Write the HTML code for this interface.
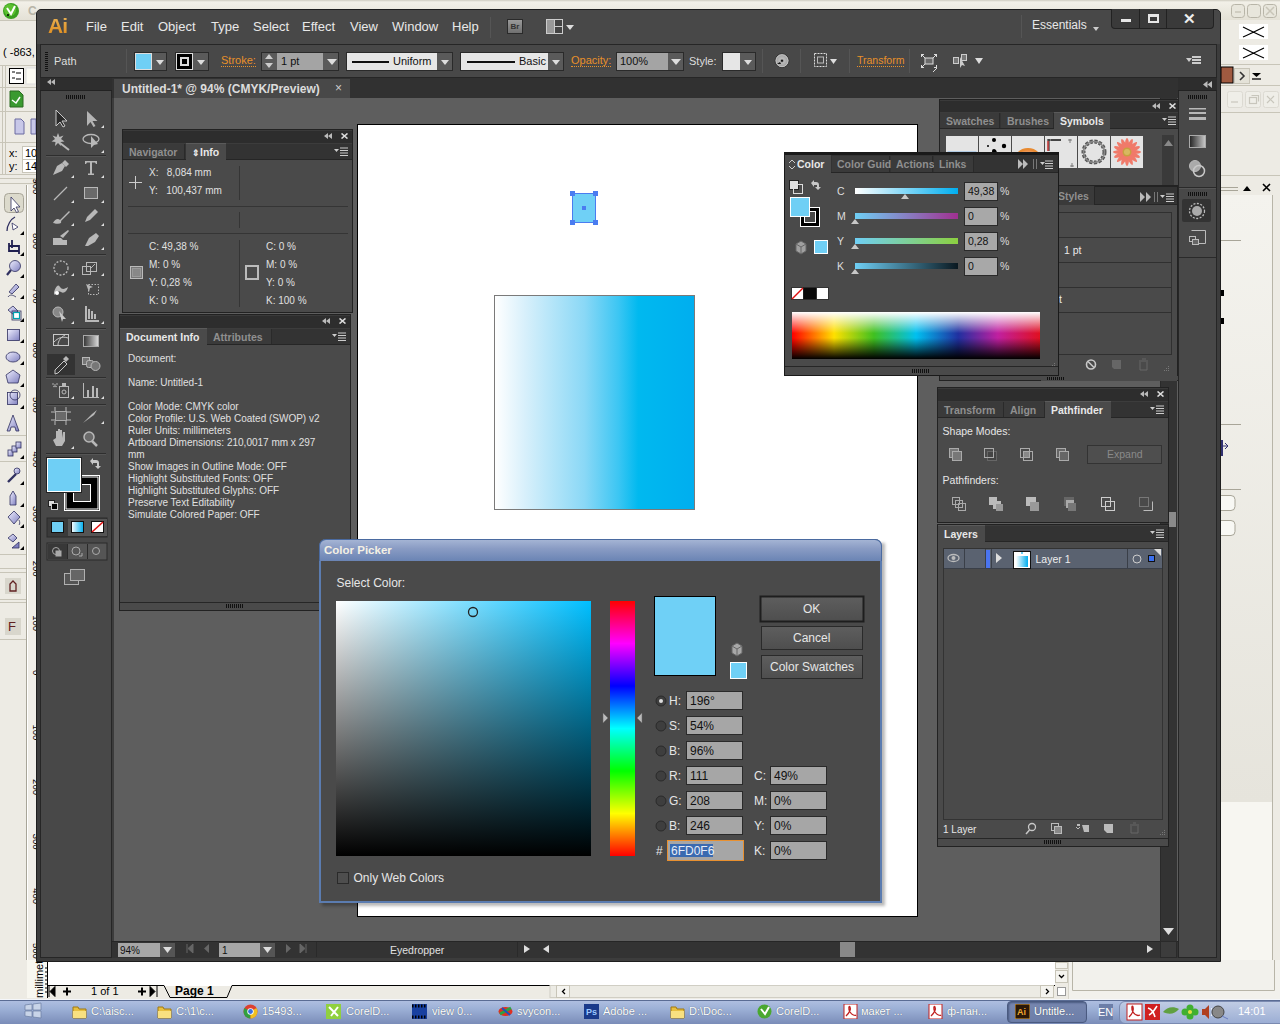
<!DOCTYPE html>
<html><head><meta charset="utf-8">
<style>
*{margin:0;padding:0;box-sizing:border-box}
html,body{width:1280px;height:1024px;overflow:hidden;background:#edebe4;font-family:"Liberation Sans",sans-serif;font-size:11px;color:#dcdcdc}
.a{position:absolute}
.t{position:absolute;white-space:nowrap;color:#e0e0e0;line-height:1}
.m{font-size:13px;color:#e8e8e8}
.panel{position:absolute;background:#4a4a4a;border:1px solid #262626}
.ph{position:absolute;left:0;right:0;top:0;background:#2f2f2f}
.tabs{position:absolute;left:0;right:0;background:#383838;border-bottom:1px solid #2a2a2a}
.tab{position:absolute;top:0;bottom:-1px;font-weight:bold;color:#8e8e8e;padding-left:7px;line-height:17px;border-right:1px solid #2a2a2a;font-size:11px}
.tab.on{background:#4a4a4a;color:#e6e6e6}
.sep{position:absolute;width:1px;background:#2e2e2e;border-right:1px solid #555}
.dd{position:absolute;background:#5a5a5a;border:1px solid #2a2a2a}
.inp{position:absolute;background:#a6a6a6;border:1px solid #2a2a2a;color:#111;font-size:11px;line-height:16px;padding-left:4px}
.or{color:#e8902a;border-bottom:1px dotted #e8902a}
</style></head><body>
<!-- ===== background corel ===== -->

<div class="a" style="left:0;top:0;width:1280px;height:21px;background:linear-gradient(#cfccc0 0,#f2f0e8 2px,#e4e1d6 100%);border-bottom:1px solid #c8c5b8"></div>
<svg class="a" style="left:2px;top:2px" width="18" height="18"><circle cx="9" cy="9" r="8" fill="#3aa020"/><circle cx="8" cy="8" r="6" fill="#5cc030"/><path d="M5 6l4 6 4-8" stroke="#fff" stroke-width="2" fill="none"/><circle cx="6" cy="13" r="1" fill="#000"/></svg>
<div class="t" style="left:28px;top:5px;font-size:12px;color:#b8b5a8;font-weight:bold">C</div>
<svg class="a" style="left:1230px;top:3px" width="48" height="16"><g fill="#e8e6dc" stroke="#b8b5a8"><rect x="1.5" y="1.5" width="13" height="13" rx="3"/><rect x="17.5" y="1.5" width="13" height="13" rx="3"/><rect x="33.5" y="1.5" width="13" height="13" rx="3"/></g><path d="M5 9h6M36 4l8 8M44 4l-8 8" stroke="#c8c5b8" stroke-width="1.5"/></svg>
<div class="t" style="left:3px;top:47px;font-size:11px;color:#000">( -863,</div>
<svg class="a" style="left:0;top:60px" width="36" height="600" viewBox="0 60 36 600"><g stroke="#c8c5b8"><path d="M0 65.5h36M0 87.5h36M0 111.5h36M0 142.5h36M0 174.5h36M0 178.5h36M0 183.5h36"/><path d="M2.5 65v110M5.5 65v110"/></g><rect x="9.5" y="68.5" width="14" height="15" fill="#fff" stroke="#000"/><path d="M12 72h3M12 78h3M16 73h5M16 79h5" stroke="#000"/><rect x="26" y="68" width="10" height="16" fill="#fbfaf2" stroke="#ddd"/><path d="M10 91h9l4 4v12h-13z" fill="#3a9a30" stroke="#2a6a20"/><path d="M12 100l4 3 4-6" stroke="#fff" stroke-width="1.5" fill="none"/><path d="M15 119h6l3 3v12h-9z" fill="#c8c8e8" stroke="#6a6aa0"/><path d="M31 119h5v15h-5z" fill="#c8c8e8" stroke="#6a6aa0"/><text x="9" y="157" font-size="11" font-family="Liberation Sans">x:</text><text x="9" y="170" font-size="11" font-family="Liberation Sans">y:</text><rect x="22.5" y="146.5" width="14" height="13" fill="#fff" stroke="#c8c5b8"/><rect x="22.5" y="159.5" width="14" height="13" fill="#fff" stroke="#c8c5b8"/><text x="25" y="157" font-size="11" font-family="Liberation Sans">10</text><text x="25" y="170" font-size="11" font-family="Liberation Sans">14</text><path d="M26.5 185v475" stroke="#a8a598"/><path d="M27.5 185v475" stroke="#fff"/><rect x="28" y="185" width="8" height="475" fill="#f0eee8"/><rect x="4.5" y="193.5" width="19" height="19" rx="4" fill="#dcdacc" stroke="#a8a598"/><defs><linearGradient id="cg" x1="0" y1="0" x2="1" y2="1"><stop offset="0" stop-color="#f0f0ff"/><stop offset="1" stop-color="#8080c0"/></linearGradient></defs><g stroke="#303060" stroke-width=".8" fill="url(#cg)"><path d="M11 197v14l3-3 2.5 4.5 2-1-2.5-4.5h4z" fill="#fff"/><path d="M7 231c0-6 4-12 8-14" fill="none" stroke-width="1.3"/><path d="M12 223l6 4-5 3z" fill="#fff"/><path d="M9 243v8h10M12 248v-8M9 246h10v8" fill="none" stroke-width="1.8" stroke="#202050"/><circle cx="15" cy="266" r="5.5"/><path d="M11 270l-4 5" stroke-width="2.2"/><path d="M9 292l7-8 3 3-7 7z"/><path d="M8 297c2-3 5-2 8 0" fill="none"/><path d="M8 310l5-4 5 5-4 4z"/><rect x="13.5" y="312.5" width="6" height="6" fill="#fff" stroke="#00a0b0" stroke-width="1.2"/><rect x="12" y="311" width="9" height="9" fill="none"/><rect x="7.5" y="329.5" width="12" height="11"/><ellipse cx="13" cy="357" rx="7" ry="5"/><path d="M13 370l7 5-2 8h-10l-2-8z"/><rect x="7.5" y="392.5" width="10" height="12"/><circle cx="15" cy="395" r="5" fill="none"/><path d="M7 431l6-16 6 16h-3l-1-4h-4l-1 4z"/><rect x="8" y="450" width="5" height="6"/><rect x="12" y="446" width="5" height="6"/><rect x="16" y="442" width="5" height="6"/><path d="M8 482l8-8" stroke-width="2.4"/><circle cx="17" cy="471" r="3"/><path d="M10 505v-9l3-5 3 5v9z"/><path d="M8 517l6-6 6 6-6 7z"/><path d="M19 520c1 2 1 4 0 5" fill="none"/><path d="M8 538l5-4 4 4-4 4z"/><path d="M12 548l7-6v6z" fill="#8080c0"/></g><g fill="#000"><path d="M24 235h-4l4-4zM24 256h-4l4-4zM24 278h-4l4-4zM24 299h-4l4-4zM24 322h-4l4-4zM24 343h-4l4-4zM24 365h-4l4-4zM24 387h-4l4-4zM24 409h-4l4-4zM24 459h-4l4-4zM24 485h-4l4-4zM24 507h-4l4-4zM24 528h-4l4-4zM24 550h-4l4-4z"/></g><path d="M0 435.5h26M0 461.5h26M0 554.5h26M0 568.5h26M0 572.5h26M0 599.5h26M0 602.5h26M0 639.5h26" stroke="#c8c5b8"/><rect x="5" y="578" width="16" height="16" fill="#d8d6cc"/><path d="M10 591v-7l3-3 3 3v7z" fill="none" stroke="#602020" stroke-width="1.3"/><rect x="5" y="618" width="16" height="17" fill="#d8d6cc"/><text x="8" y="631" font-size="13" fill="#602020" font-family="Liberation Sans">F</text></svg>
<div class="a" style="left:26px;top:660px;width:10px;height:300px;background:#f0eee8;border-left:1px solid #a8a598;box-shadow:inset 1px 0 0 #fff"></div>
<svg class="a" style="left:0;top:170px" width="36" height="800" viewBox="0 170 36 800"><text transform="translate(32.5 178.5) rotate(90)" font-size="9.5" fill="#000" font-family="Liberation Sans">900</text><text transform="translate(32.5 233.1) rotate(90)" font-size="9.5" fill="#000" font-family="Liberation Sans">800</text><text transform="translate(32.5 287.7) rotate(90)" font-size="9.5" fill="#000" font-family="Liberation Sans">700</text><text transform="translate(32.5 342.3) rotate(90)" font-size="9.5" fill="#000" font-family="Liberation Sans">600</text><text transform="translate(32.5 396.9) rotate(90)" font-size="9.5" fill="#000" font-family="Liberation Sans">500</text><text transform="translate(32.5 451.5) rotate(90)" font-size="9.5" fill="#000" font-family="Liberation Sans">400</text><text transform="translate(32.5 506.1) rotate(90)" font-size="9.5" fill="#000" font-family="Liberation Sans">300</text><text transform="translate(32.5 560.7) rotate(90)" font-size="9.5" fill="#000" font-family="Liberation Sans">200</text><text transform="translate(32.5 615.3) rotate(90)" font-size="9.5" fill="#000" font-family="Liberation Sans">100</text><text transform="translate(32.5 669.9) rotate(90)" font-size="9.5" fill="#000" font-family="Liberation Sans">0</text><text transform="translate(32.5 724.5) rotate(90)" font-size="9.5" fill="#000" font-family="Liberation Sans">100</text><text transform="translate(32.5 779.1) rotate(90)" font-size="9.5" fill="#000" font-family="Liberation Sans">200</text><text transform="translate(32.5 833.7) rotate(90)" font-size="9.5" fill="#000" font-family="Liberation Sans">300</text><text transform="translate(32.5 888.3) rotate(90)" font-size="9.5" fill="#000" font-family="Liberation Sans">400</text><text transform="translate(32.5 942.9) rotate(90)" font-size="9.5" fill="#000" font-family="Liberation Sans">500</text></svg>
<svg class="a" style="left:1221px;top:20px" width="59" height="980" viewBox="1221 20 59 980">
<rect x="1221" y="20" width="59" height="980" fill="#edebe4"/>
<rect x="1239" y="24" width="29" height="15" fill="#fff"/><rect x="1239" y="45" width="29" height="15" fill="#fff"/>
<path d="M1243 27c6 3 14 7 21 10M1264 27c-6 3-14 7-21 10M1243 48c6 3 14 7 21 10M1264 48c-6 3-14 7-21 10" stroke="#000" stroke-width="1.1" fill="none"/>
<path d="M1221 64.5h59M1221 85.5h59" stroke="#c8c5b8"/>
<rect x="1221" y="67" width="12" height="16" fill="#a05a40" stroke="#000"/>
<rect x="1234.5" y="68.5" width="15" height="15" fill="#e4e2d8" stroke="#c8c5b8"/><path d="M1240 72l4 4-4 4" stroke="#333" stroke-width="1.6" fill="none"/>
<path d="M1252 73h9l-4.5 4z" fill="#000"/><path d="M1252 79h9" stroke="#000" stroke-width="1.3"/>
<rect x="1221" y="88" width="59" height="24" fill="#eceae4"/><g stroke="#dcdad2" fill="#efeee8"><rect x="1227.5" y="91.5" width="15" height="16" rx="2"/><rect x="1245.5" y="91.5" width="15" height="16" rx="2"/><rect x="1263.5" y="91.5" width="15" height="16" rx="2"/></g><g stroke="#c8c6bc" fill="none" stroke-width="1.2"><path d="M1231 102h7"/><rect x="1249.5" y="97.5" width="7" height="6"/><path d="M1251.5 95.5h7v6"/><path d="M1267 96l7 7M1274 96l-7 7"/></g>
<path d="M1221 112.5h59" stroke="#c8c5b8"/>
<path d="M1221 175.5h59" stroke="#c8c5b8"/>
<path d="M1221 187.5h17M1221 190.5h17" stroke="#a8a598"/>
<path d="M1243 191h8l-4-5z" fill="#000"/><path d="M1263 184l7 7M1270 184l-7 7" stroke="#000" stroke-width="1.6"/>
<rect x="1221" y="195" width="51" height="607" fill="#f1f0ea"/>
<rect x="1221" y="195" width="51" height="607" fill="url(#rsg)"/>
<defs><linearGradient id="rsg" x1="0" y1="0" x2="0" y2="1"><stop offset="0" stop-color="#f4f3ee"/><stop offset="1" stop-color="#e6e4dc"/></linearGradient></defs>
<rect x="1221" y="802" width="51" height="186" fill="#f7f6f1"/>
<path d="M1272.5 195v793M1221 988.5h52" stroke="#b8b5a8"/>
<path d="M1221 240.5h20M1221 424.5h20" stroke="#a8a598"/>
<rect x="1221" y="290" width="3" height="6" fill="#000"/><rect x="1221" y="318" width="3" height="6" fill="#000"/>
<path d="M1222 446h6M1225 443l3 3-3 3" stroke="#303070" fill="none"/><rect x="1221" y="440" width="2" height="16" fill="#303070"/>
<rect x="1210" y="495.5" width="25" height="15" rx="4" fill="#f8f8f4" stroke="#a8a598"/>
<rect x="1210" y="520.5" width="25" height="15" rx="4" fill="#f8f8f4" stroke="#a8a598"/>
<path d="M1221 489.5h20" stroke="#a8a598"/>
</svg>
<svg class="a" style="left:0;top:960px" width="1280" height="40" viewBox="0 960 1280 40">
<rect x="0" y="960" width="1280" height="40" fill="#edebe4"/>
<rect x="47" y="962" width="1013" height="24" fill="#fff"/>
<rect x="27" y="960" width="20" height="38" fill="#f8f7f0"/><path d="M47.5 960v38" stroke="#000"/>
<text transform="translate(43 998) rotate(-90)" font-size="11" font-family="Liberation Sans" fill="#000">millimet</text>
<path d="M45 968h2M45 972h2M45 976h2M45 980h2M45 984h2M45 988h2M45 992h2" stroke="#000"/>
<path d="M47 985.5h117l6 12h57l5-12h828" stroke="#000" fill="none"/>
<path d="M49 986v11M50 991.5l5-5v10z" fill="#000" stroke="#000"/>
<path d="M63 991.5h8M67 987.5v8M138 991.5h8M142 987.5v8" stroke="#000" stroke-width="2"/>
<path d="M150 986.5l5 5-5 5zM157 986v11" fill="#000" stroke="#000"/>
<rect x="1055" y="962" width="13" height="36" fill="#edebe4"/>
<rect x="1055.5" y="962.5" width="12" height="6" fill="#f4f3ee" stroke="#c8c5b8"/>
<rect x="1055.5" y="970.5" width="12" height="12" fill="#f4f3ee" stroke="#c8c5b8"/><path d="M1059 975l2.5 2.5 2.5-2.5" stroke="#000" stroke-width="1.3" fill="none"/>
<rect x="550" y="985.5" width="491" height="12" fill="#ecebe4" stroke="#d0cec4"/>
<rect x="1040.5" y="985.5" width="13" height="12" fill="#f4f3ee" stroke="#c8c5b8"/><path d="M1046 989l2.5 2.5-2.5 2.5" stroke="#000" stroke-width="1.3" fill="none"/>
<rect x="556.5" y="985.5" width="13" height="12" fill="#f4f3ee" stroke="#c8c5b8"/><path d="M565 989l-2.5 2.5 2.5 2.5" stroke="#000" stroke-width="1.3" fill="none"/>
<rect x="1057.5" y="987.5" width="8" height="8" fill="#fff" stroke="#999"/>
<rect x="1068" y="960" width="212" height="40" fill="#f2f1ec"/><path d="M1068.5 960v40" stroke="#d8d6cc"/>
<path d="M1072.5 960v30.5h202v-30.5" stroke="#b8b5a8" fill="none"/>
</svg>
<div class="t" style="left:91px;top:986px;font-size:11px;color:#000">1 of 1</div>
<div class="t" style="left:175px;top:985px;font-size:12px;color:#000;font-weight:bold">Page 1</div>
<div class="a" style="left:0;top:999px;width:1280px;height:25px;background:linear-gradient(#f4f6fa 0,#f4f6fa 1px,#5a6c94 1px,#5a6c94 2px,#aebee0 2px,#9cb0d6 40%,#7a8cb8 100%)"></div>
<svg class="a" style="left:23px;top:1002px" width="20" height="18"><g fill="#c8d4e8" stroke="#6a7ca0" stroke-width=".7"><path d="M2 3l7-1v6H2zM10 2l8-1v7h-8zM2 9h7v6l-7-1zM10 9h8v7l-8-1z"/></g></svg>
<div class="a" style="left:72px;top:1004px;width:15px;height:15px"><svg width="15" height="15"><path d="M1 3h5l1 2h7v9H1z" fill="#e8c040" stroke="#a07810"/><path d="M1 7h13v7H1z" fill="#f8e080"/></svg></div>
<div class="t" style="left:91px;top:1006px;font-size:11px;color:#fff;text-shadow:0 0 1px #456">C:\aisc...</div>
<div class="a" style="left:157px;top:1004px;width:15px;height:15px"><svg width="15" height="15"><path d="M1 3h5l1 2h7v9H1z" fill="#e8c040" stroke="#a07810"/><path d="M1 7h13v7H1z" fill="#f8e080"/></svg></div>
<div class="t" style="left:176px;top:1006px;font-size:11px;color:#fff;text-shadow:0 0 1px #456">C:\1\c...</div>
<div class="a" style="left:243px;top:1004px;width:15px;height:15px"><svg width="15" height="15"><circle cx="7.5" cy="7.5" r="7" fill="#dd4030"/><path d="M7.5 7.5L1.5 4A7 7 0 0 0 7.5 14.5z" fill="#30a040"/><path d="M7.5 7.5L13.5 4A7 7 0 0 1 7.5 14.5z" fill="#f0c020"/><circle cx="7.5" cy="7.5" r="3.2" fill="#fff"/><circle cx="7.5" cy="7.5" r="2.4" fill="#3a70e0"/></svg></div>
<div class="t" style="left:262px;top:1006px;font-size:11px;color:#fff;text-shadow:0 0 1px #456">15493...</div>
<div class="a" style="left:326px;top:1004px;width:15px;height:15px"><svg width="15" height="15"><rect width="15" height="15" fill="#90d040"/><path d="M3 3l9 9M5 12l7-9" stroke="#fff" stroke-width="2"/></svg></div>
<div class="t" style="left:346px;top:1006px;font-size:11px;color:#fff;text-shadow:0 0 1px #456">CorelD...</div>
<div class="a" style="left:412px;top:1004px;width:15px;height:15px"><svg width="15" height="15"><rect width="15" height="15" fill="#1840a0"/><path d="M0 2h15M0 13h15" stroke="#000" stroke-dasharray="1.5 1.5" stroke-width="3"/></svg></div>
<div class="t" style="left:432px;top:1006px;font-size:11px;color:#fff;text-shadow:0 0 1px #456">view 0...</div>
<div class="a" style="left:498px;top:1004px;width:15px;height:15px"><svg width="15" height="15"><ellipse cx="7.5" cy="7.5" rx="7" ry="4.5" fill="#e03020"/><path d="M2 10l11-6" stroke="#30a040" stroke-width="3"/><path d="M4 4l8 7" stroke="#2050c0" stroke-width="2"/></svg></div>
<div class="t" style="left:517px;top:1006px;font-size:11px;color:#fff;text-shadow:0 0 1px #456">svycon...</div>
<div class="a" style="left:584px;top:1004px;width:15px;height:15px"><svg width="15" height="15"><rect width="15" height="15" fill="#1a3a8a"/><text x="2" y="11" font-size="9" font-weight="bold" fill="#9cc8ff" font-family="Liberation Sans">Ps</text></svg></div>
<div class="t" style="left:603px;top:1006px;font-size:11px;color:#fff;text-shadow:0 0 1px #456">Adobe ...</div>
<div class="a" style="left:670px;top:1004px;width:15px;height:15px"><svg width="15" height="15"><path d="M1 3h5l1 2h7v9H1z" fill="#e8c040" stroke="#a07810"/><path d="M1 7h13v7H1z" fill="#f8e080"/></svg></div>
<div class="t" style="left:689px;top:1006px;font-size:11px;color:#fff;text-shadow:0 0 1px #456">D:\Doc...</div>
<div class="a" style="left:757px;top:1004px;width:15px;height:15px"><svg width="15" height="15"><circle cx="7.5" cy="7.5" r="7" fill="#4aa830"/><path d="M4 5l4 5 4-7" stroke="#fff" stroke-width="2" fill="none"/></svg></div>
<div class="t" style="left:776px;top:1006px;font-size:11px;color:#fff;text-shadow:0 0 1px #456">CorelD...</div>
<div class="a" style="left:843px;top:1004px;width:15px;height:15px"><svg width="15" height="15"><rect x="1" y="0" width="13" height="15" fill="#fff" stroke="#c02020"/><path d="M3 12c3-3 5-7 4-9s-2 2 0 5 5 4 6 3" stroke="#c02020" fill="none" stroke-width="1.3"/></svg></div>
<div class="t" style="left:861px;top:1006px;font-size:11px;color:#fff;text-shadow:0 0 1px #456">макет ...</div>
<div class="a" style="left:928px;top:1004px;width:15px;height:15px"><svg width="15" height="15"><rect x="1" y="0" width="13" height="15" fill="#fff" stroke="#c02020"/><path d="M3 12c3-3 5-7 4-9s-2 2 0 5 5 4 6 3" stroke="#c02020" fill="none" stroke-width="1.3"/></svg></div>
<div class="t" style="left:947px;top:1006px;font-size:11px;color:#fff;text-shadow:0 0 1px #456">ф-пан...</div>
<div class="a" style="left:1007px;top:1001px;width:80px;height:22px;border-radius:4px;background:linear-gradient(#7888b0,#6c7ea8);border:1px solid #4a5a80;box-shadow:inset 1px 1px 2px #4a5a80"></div>
<div class="a" style="left:1015px;top:1004px;width:15px;height:15px"><svg width="15" height="15"><rect width="15" height="15" fill="#2a1808" stroke="#e0a030"/><text x="2" y="11" font-size="9" font-weight="bold" fill="#f0a830" font-family="Liberation Sans">Ai</text></svg></div>
<div class="t" style="left:1034px;top:1006px;font-size:11px;color:#fff;text-shadow:0 0 1px #456">Untitle...</div>
<div class="a" style="left:1099px;top:1004px;width:14px;height:16px;background:#6c7ea8"></div>
<div class="t" style="left:1098px;top:1007px;font-size:11px;color:#fff">EN</div>
<div class="a" style="left:1119px;top:1001px;width:165px;height:23px;border-radius:6px 0 0 6px;background:linear-gradient(#c0cce4,#9caed4);border:1px solid #7a8ab0"></div>
<svg class="a" style="left:1125px;top:1003px" width="95" height="18">
<rect x="2" y="1" width="15" height="16" fill="#fff" stroke="#c02020"/><path d="M4 14c3-3 5-7 4-10s-2 2 0 5 5 4 7 3" stroke="#c02020" fill="none" stroke-width="1.3"/>
<rect x="20" y="1" width="15" height="16" fill="#d02020"/><path d="M24 12c4-2 6-6 8-9M23 5c3 1 6 5 7 9" stroke="#fff" stroke-width="1.6" fill="none"/>
<path d="M38 9c4-5 10-6 16-3-4 5-10 6-16 3z" fill="#60a040"/>
<g fill="#40b030"><circle cx="65" cy="5" r="3.5"/><circle cx="70" cy="9" r="3.5"/><circle cx="65" cy="13" r="3.5"/><circle cx="60" cy="9" r="3.5"/></g><circle cx="65" cy="9" r="2" fill="#e0e040"/>
<path d="M77 6h3l4-4v14l-4-4h-3z" fill="#b04020"/><path d="M86 5c2 2 2 6 0 8" stroke="#fff" fill="none"/>
</svg>
<svg class="a" style="left:1210px;top:1004px" width="20" height="16"><circle cx="8" cy="8" r="6" fill="#888" stroke="#444"/><path d="M12 12l6 3" stroke="#6a7cc0"/></svg>
<div class="t" style="left:1238px;top:1006px;font-size:11px;color:#fff">14:01</div>
<!-- ===== AI window ===== -->
<div class="a" style="left:36px;top:9px;width:1185px;height:953px;background:#3c3c3c;border:1px solid #1e1e1e;border-radius:5px 5px 0 0"></div>
<div class="a" style="left:37px;top:10px;width:1183px;height:34px;background:#484848;border-radius:4px 4px 0 0"></div>
<!-- logo + menus -->
<div class="t" style="left:48px;top:15px;font-size:21px;font-weight:bold;color:#e39a30;letter-spacing:-1px;background:linear-gradient(#e8b458,#e08c1c);-webkit-background-clip:text;-webkit-text-fill-color:transparent">Ai</div>
<div class="t m" style="left:86px;top:20px">File</div>
<div class="t m" style="left:121px;top:20px">Edit</div>
<div class="t m" style="left:158px;top:20px">Object</div>
<div class="t m" style="left:211px;top:20px">Type</div>
<div class="t m" style="left:253px;top:20px">Select</div>
<div class="t m" style="left:302px;top:20px">Effect</div>
<div class="t m" style="left:350px;top:20px">View</div>
<div class="t m" style="left:392px;top:20px">Window</div>
<div class="t m" style="left:452px;top:20px">Help</div>
<div class="sep" style="left:490px;top:17px;height:21px"></div>
<div class="a" style="left:507px;top:19px;width:16px;height:15px;background:linear-gradient(#9a9a9a,#707070);border:1px solid #2a2a2a;color:#333;font-size:8px;font-weight:bold;line-height:13px;text-align:center">Br</div>
<div class="a" style="left:546px;top:19px;width:17px;height:15px;border:1px solid #ccc;background:#444"><div class="a" style="left:7px;top:0;width:1px;height:13px;background:#ccc"></div><div class="a" style="left:8px;top:6px;width:7px;height:1px;background:#ccc"></div><div class="a" style="left:0;top:0;width:7px;height:13px;background:#999"></div></div>
<div class="a" style="left:566px;top:25px;border-left:4px solid transparent;border-right:4px solid transparent;border-top:5px solid #ddd"></div>
<div class="sep" style="left:1021px;top:15px;height:23px"></div>
<div class="t m" style="left:1032px;top:19px;font-size:12px">Essentials</div>
<div class="a" style="left:1093px;top:27px;border-left:3px solid transparent;border-right:3px solid transparent;border-top:4px solid #ccc"></div>
<!-- window buttons -->
<div class="a" style="left:1111px;top:9px;width:103px;height:20px;background:#3a3a3a;border:1px solid #222;border-top:0;border-radius:0 0 4px 4px"></div>
<div class="a" style="left:1139px;top:9px;width:1px;height:19px;background:#222"></div>
<div class="a" style="left:1166px;top:9px;width:1px;height:19px;background:#222"></div>
<div class="a" style="left:1121px;top:19px;width:10px;height:3px;background:#e6e6e6"></div>
<div class="a" style="left:1148px;top:14px;width:11px;height:9px;border:2px solid #e6e6e6;border-top-width:3px"></div>
<div class="t" style="left:1183px;top:11px;font-size:15px;font-weight:bold;color:#eee">✕</div>

<!-- ===== control bar ===== -->
<div class="a" style="left:40px;top:44px;width:1177px;height:34px;background:#484848;border:1px solid #262626"></div>
<div class="a" style="left:45px;top:52px;width:3px;height:20px;background:repeating-linear-gradient(#111 0 1px,transparent 1px 2px)"></div>
<div class="t" style="left:54px;top:56px;font-size:11px;color:#ddd">Path</div>
<div class="sep" style="left:126px;top:49px;height:24px"></div>
<div class="dd" style="left:134px;top:52px;width:33px;height:19px"></div>
<div class="a" style="left:135px;top:53px;width:17px;height:17px;background:#6fcff5;border:1px solid #ddd"></div>
<div class="a" style="left:156px;top:60px;border-left:4px solid transparent;border-right:4px solid transparent;border-top:5px solid #ddd"></div>
<div class="dd" style="left:175px;top:52px;width:34px;height:19px"></div>
<div class="a" style="left:176px;top:53px;width:17px;height:17px;background:#000;border:1px solid #ddd"><div class="a" style="left:3px;top:3px;width:9px;height:9px;border:2px solid #ddd"></div></div>
<div class="a" style="left:197px;top:60px;border-left:4px solid transparent;border-right:4px solid transparent;border-top:5px solid #ddd"></div>
<div class="t or" style="left:221px;top:55px;font-size:11px">Stroke:</div>
<div class="dd" style="left:261px;top:52px;width:78px;height:19px"></div>
<div class="a" style="left:277px;top:53px;width:46px;height:17px;background:#a4a4a4"></div>
<div class="t" style="left:281px;top:56px;color:#111">1 pt</div>
<div class="a" style="left:265px;top:54px;border-left:4px solid transparent;border-right:4px solid transparent;border-bottom:5px solid #ccc"></div>
<div class="a" style="left:265px;top:63px;border-left:4px solid transparent;border-right:4px solid transparent;border-top:5px solid #ccc"></div>
<div class="a" style="left:327px;top:59px;border-left:5px solid transparent;border-right:5px solid transparent;border-top:6px solid #ddd"></div>
<div class="dd" style="left:346px;top:52px;width:107px;height:19px"></div>
<div class="a" style="left:347px;top:53px;width:90px;height:17px;background:#e6e6e6"></div>
<div class="a" style="left:352px;top:61px;width:37px;height:2px;background:#111"></div>
<div class="t" style="left:393px;top:56px;color:#111">Uniform</div>
<div class="a" style="left:441px;top:60px;border-left:4px solid transparent;border-right:4px solid transparent;border-top:5px solid #ddd"></div>
<div class="dd" style="left:460px;top:52px;width:104px;height:19px"></div>
<div class="a" style="left:461px;top:53px;width:87px;height:17px;background:#e6e6e6"></div>
<div class="a" style="left:467px;top:61px;width:48px;height:2px;background:#111"></div>
<div class="t" style="left:519px;top:56px;color:#111">Basic</div>
<div class="a" style="left:552px;top:60px;border-left:4px solid transparent;border-right:4px solid transparent;border-top:5px solid #ddd"></div>
<div class="t or" style="left:571px;top:55px;font-size:11px">Opacity:</div>
<div class="dd" style="left:616px;top:52px;width:68px;height:19px"></div>
<div class="a" style="left:617px;top:53px;width:51px;height:17px;background:#a4a4a4"></div>
<div class="t" style="left:620px;top:56px;color:#111">100%</div>
<div class="a" style="left:671px;top:59px;border-left:5px solid transparent;border-right:5px solid transparent;border-top:6px solid #ddd"></div>
<div class="t" style="left:689px;top:56px;color:#ddd">Style:</div>
<div class="dd" style="left:722px;top:52px;width:34px;height:19px"></div>
<div class="a" style="left:723px;top:53px;width:17px;height:17px;background:#e6e6e6"></div>
<div class="a" style="left:744px;top:60px;border-left:4px solid transparent;border-right:4px solid transparent;border-top:5px solid #ddd"></div>
<div class="sep" style="left:762px;top:49px;height:24px"></div>
<svg class="a" style="left:770px;top:50px" width="220" height="24" viewBox="770 50 220 24">
<defs><radialGradient id="glb" cx=".5" cy=".5" r=".5"><stop offset="0" stop-color="#444"/><stop offset=".3" stop-color="#bbb"/><stop offset="1" stop-color="#999"/></radialGradient></defs>
<circle cx="782" cy="60.7" r="7" fill="url(#glb)" stroke="#333"/><circle cx="782" cy="60.7" r="6" fill="none" stroke="#ccc" stroke-width=".8"/><circle cx="782" cy="60.7" r="1" fill="#111"/><path d="M777 64l3-2 1 2z" fill="#111"/>
<rect x="814.5" y="53.5" width="12" height="13" fill="none" stroke="#ddd" stroke-dasharray="2 1"/>
<rect x="817.5" y="57" width="6" height="6" fill="none" stroke="#bbb"/>
<path d="M830 59h7l-3.5 5z" fill="#ddd"/>
<rect x="925" y="58" width="8" height="6" fill="#6a6a6a" stroke="#ddd"/>
<path d="M921 54l4 4M937 54l-4 4M921 68l4-4M937 68l-4 4" stroke="#ddd"/>
<path d="M921 54h3v1h-2v2h-1zM937 54h-3v1h2v2h1zM921 68h3v-1h-2v-2h-1zM937 68h-3v-1h2v-2h1z" fill="#ddd"/>
<rect x="953.5" y="57.5" width="5" height="6" fill="#777" stroke="#ccc"/>
<rect x="961.5" y="54.5" width="5" height="6" fill="#777" stroke="#ccc"/>
<path d="M960 57v11l2-3 3 1z" fill="#ccc"/>
<path d="M975 58h8l-4 6z" fill="#ddd"/>
</svg>
<div class="sep" style="left:800px;top:49px;height:24px"></div>
<div class="sep" style="left:849px;top:49px;height:24px"></div>
<div class="t or" style="left:857px;top:55px;font-size:10.5px">Transform</div>
<div class="sep" style="left:909px;top:49px;height:24px"></div>
<div class="a" style="left:1186px;top:58px;border-left:3px solid transparent;border-right:3px solid transparent;border-top:4px solid #ccc"></div>
<div class="a" style="left:1192px;top:56px;width:9px;height:9px;background:repeating-linear-gradient(#ccc 0 2px,transparent 2px 3px)"></div>

<!-- ===== tab bar ===== -->
<div class="a" style="left:112px;top:78px;width:1066px;height:20px;background:#313131"></div>
<div class="a" style="left:114px;top:79px;width:236px;height:19px;background:#484848"></div>
<div class="t" style="left:122px;top:83px;font-size:12px;font-weight:bold;color:#dcdcdc">Untitled-1* @ 94% (CMYK/Preview)</div>
<div class="t" style="left:335px;top:82px;font-size:12px;color:#ccc">×</div>

<!-- ===== canvas ===== -->
<div class="a" style="left:114px;top:98px;width:1064px;height:844px;background:#5e5e5e"></div>

<!-- ===== toolbar ===== -->
<div class="a" style="left:40px;top:78px;width:72px;height:880px;background:#484848;border:1px solid #262626;border-top:0"></div>
<div class="a" style="left:40px;top:78px;width:72px;height:13px;background:#2e2e2e;border-bottom:1px solid #222"></div>
<svg class="a" style="left:40px;top:78px" width="72" height="520" viewBox="40 78 72 520">
<g fill="#b8b8b8"><path d="M47 82l4 3v-6z M51 82l4 3v-6z"/></g>
<g fill="#111"><rect x="66" y="95" width="1" height="4"/><rect x="68" y="95" width="1" height="4"/><rect x="70" y="95" width="1" height="4"/><rect x="72" y="95" width="1" height="4"/><rect x="74" y="95" width="1" height="4"/><rect x="76" y="95" width="1" height="4"/><rect x="78" y="95" width="1" height="4"/><rect x="80" y="95" width="1" height="4"/><rect x="82" y="95" width="1" height="4"/><rect x="84" y="95" width="1" height="4"/></g>
<g fill="#444" stroke="#aaa" stroke-width="1"><path d="M56 110v16l4-4 3 5 2-1-3-5h5z" fill="#2a2a2a" stroke="#c8c8c8"/></g>
<path d="M87 111v15l3.5-4 3 5 2-1-3-5h5z" fill="#b4b4b4"/>
<g fill="#e0e0e0"><path d="M104 128h-3l3-3z"/><path d="M104 153h-3l3-3z"/><path d="M74 178h-3l3-3z"/><path d="M104 178h-3l3-3z"/><path d="M74 203h-3l3-3z"/><path d="M104 203h-3l3-3z"/><path d="M74 226h-3l3-3z"/><path d="M104 226h-3l3-3z"/><path d="M104 250h-3l3-3z"/><path d="M74 276h-3l3-3z"/><path d="M104 276h-3l3-3z"/><path d="M74 300h-3l3-3z"/><path d="M74 324h-3l3-3z"/><path d="M104 324h-3l3-3z"/><path d="M74 374h-3l3-3z"/><path d="M74 399h-3l3-3z"/><path d="M104 399h-3l3-3z"/><path d="M104 424h-3l3-3z"/><path d="M74 449h-3l3-3z"/></g>
<g stroke="#b8b8b8" fill="#b8b8b8">
<path d="M58 133l1.5 4 4-1.5-2.5 3.5 3.5 2.5-4 .5.5 4-3-3-3 3 .5-4-4-.5 3.5-2.5-2.5-3.5 4 1.5z" stroke="none"/>
<path d="M60 143l9 7" stroke-width="2"/>
<ellipse cx="91" cy="139" rx="8" ry="4.5" fill="none" stroke-width="1.3"/>
<path d="M91 136v12l3-3 4-1z" stroke="none"/>
</g>
<rect x="46" y="155" width="60" height="1" fill="#2e2e2e"/><rect x="46" y="156" width="60" height="1" fill="#555"/>
<g fill="#b8b8b8" stroke="none">
<path d="M53 175l4-9 5-3 3 3-3 5-9 4z"/><path d="M62 163l3-3 4 4-3 3z"/>
<path d="M85 161h12v3h-1l-1-1.5h-3v11h2v1.5h-6v-1.5h2v-11h-3l-1 1.5h-1z"/>
</g>
<path d="M54 200l13-13" stroke="#b8b8b8" stroke-width="1.3"/>
<rect x="84.5" y="187.5" width="13" height="11" fill="#6a6a6a" stroke="#b8b8b8"/>
<g fill="#b8b8b8">
<path d="M53 223c2-4 5-5 7-3l9-9 1 1-9 9c1 2-1 4-8 2z"/>
<path d="M85 222l2-5 8-8 3 3-8 8z"/>
<path d="M53 245v-7h8l2 2h4v5z"/><path d="M60 236l8-6 1 1-6 7z"/>
<path d="M85 246l4-8 7-5 3 3-4 6-7 4z" />
</g>
<rect x="46" y="254" width="60" height="1" fill="#2e2e2e"/><rect x="46" y="255" width="60" height="1" fill="#555"/>
<circle cx="61" cy="268" r="7" fill="none" stroke="#b8b8b8" stroke-width="1.3" stroke-dasharray="2 1.5"/>
<g fill="none" stroke="#b8b8b8"><rect x="86.5" y="262.5" width="10" height="9"/><rect x="82.5" y="266.5" width="8" height="8"/><path d="M91 268l4-4"/></g>
<g fill="#b8b8b8"><path d="M54 292c2-6 4-8 6-5s5 2 8 0c-1 4-4 7-7 5s-4 0-7 3z"/><circle cx="57" cy="293" r="2" fill="#fff"/></g>
<g fill="none" stroke="#b8b8b8" stroke-dasharray="1.5 1.5"><rect x="88.5" y="284.5" width="10" height="10"/></g><path d="M86 284l7 3-3 1-1 4z" fill="#b8b8b8"/>
<g><circle cx="58" cy="312" r="5" fill="#888" stroke="#b8b8b8"/><path d="M59 311l7 8-3 0-1 3z" fill="#c8c8c8"/></g>
<g fill="#b8b8b8"><path d="M85 306h2v14h12v2h-14z"/><rect x="88" y="309" width="2" height="10"/><rect x="91" y="311" width="2" height="8"/><rect x="94" y="314" width="2" height="5"/></g>
<rect x="46" y="328" width="60" height="1" fill="#2e2e2e"/><rect x="46" y="329" width="60" height="1" fill="#555"/>
<g fill="none" stroke="#c8c8c8"><rect x="53.5" y="334.5" width="15" height="11"/><path d="M54 342c4-4 8-6 14-4M58 345c0-4 3-8 7-10"/></g>
<defs><linearGradient id="tg" x1="0" x2="1"><stop offset="0" stop-color="#333"/><stop offset="1" stop-color="#ddd"/></linearGradient></defs>
<rect x="83.5" y="335.5" width="15" height="11" fill="url(#tg)" stroke="#aaa"/>
<rect x="47" y="354" width="28" height="21" fill="#333"/>
<path d="M55 370l9-9 3 3-9 9-3 1z" fill="none" stroke="#c8c8c8"/><path d="M63 359l3-3 3 3-3 3z" fill="#b8b8b8"/>
<g fill="#777" stroke="#b8b8b8"><rect x="82.5" y="357.5" width="7" height="7"/><rect x="86.5" y="360.5" width="7" height="7" rx="2"/><circle cx="95.5" cy="366" r="4.5"/></g>
<rect x="46" y="377" width="60" height="1" fill="#2e2e2e"/><rect x="46" y="378" width="60" height="1" fill="#555"/>
<g fill="none" stroke="#b8b8b8"><rect x="59.5" y="386.5" width="9" height="11"/><circle cx="64" cy="392" r="2"/></g><g fill="#b8b8b8"><rect x="62" y="383" width="4" height="3"/><circle cx="53" cy="384" r=".8"/><circle cx="55" cy="385" r=".8"/><circle cx="57" cy="384" r=".8"/><circle cx="54" cy="386.5" r=".8"/><circle cx="56" cy="386.5" r=".8"/></g>
<g fill="#b8b8b8"><rect x="83" y="383" width="1" height="15"/><rect x="83" y="397" width="16" height="1"/><rect x="87" y="390" width="2" height="7"/><rect x="92" y="386" width="2" height="11"/><rect x="96" y="388" width="2" height="9"/></g>
<rect x="46" y="404" width="60" height="1" fill="#2e2e2e"/><rect x="46" y="405" width="60" height="1" fill="#555"/>
<g><rect x="55.5" y="411.5" width="11" height="9" fill="#6a6a6a" stroke="#aaa"/><path d="M51 412h4M51 420h4M67 412h4M67 420h4M55 407v4M55 421v4M66 407v4M66 421v4" stroke="#b8b8b8"/></g>
<path d="M83 423l9-9 5-4-3 5z" fill="#b8b8b8"/>
<path d="M53 440l3-2v-7h2v6v-8h2v8v-7h2v8l1-6h2v9l-3 5h-6z" fill="#b8b8b8"/>
<circle cx="89" cy="437" r="5" fill="#6a6a6a" stroke="#b8b8b8" stroke-width="1.5"/><path d="M92 441l5 5" stroke="#b8b8b8" stroke-width="2.5"/>
<rect x="46" y="453" width="60" height="1" fill="#2e2e2e"/><rect x="46" y="454" width="60" height="1" fill="#555"/>
<!-- fill/stroke -->
<rect x="64.5" y="475.5" width="35" height="35" fill="#000" stroke="#fff"/>
<rect x="65" y="476" width="34" height="34" fill="#000" stroke="#111" stroke-width="0"/>
<rect x="66" y="477" width="32" height="32" fill="none" stroke="#fff"/>
<rect x="73.5" y="484.5" width="17" height="17" fill="#484848" stroke="#fff"/>
<rect x="46.5" y="457.5" width="35" height="35" fill="#6fcff5" stroke="#222"/>
<rect x="47.5" y="458.5" width="33" height="33" fill="none" stroke="#fff"/>
<path d="M90 461l3-3v2h3a3 3 0 0 1 3 3v3h2l-3 3-3-3h2v-3h-4v2z" fill="#c8c8c8"/>
<g><rect x="48.5" y="500.5" width="6" height="6" fill="#ddd" stroke="#222"/><rect x="51.5" y="503.5" width="6" height="6" fill="#000" stroke="#ccc"/></g>
<rect x="47" y="518" width="60" height="19" fill="#3a3a3a" stroke="#2a2a2a"/>
<rect x="68" y="519" width="20" height="17" fill="#555"/><rect x="88" y="519" width="19" height="17" fill="#555"/>
<rect x="51.5" y="521.5" width="12" height="11" fill="#6fcff5" stroke="#111"/>
<defs><linearGradient id="bg1" x1="0" x2="1"><stop offset="0" stop-color="#fff"/><stop offset="1" stop-color="#00aeef"/></linearGradient></defs>
<rect x="71.5" y="521.5" width="12" height="11" fill="url(#bg1)" stroke="#111"/>
<rect x="91.5" y="521.5" width="12" height="11" fill="#fff" stroke="#111"/><path d="M92 532l11-10" stroke="#e01010" stroke-width="1.6"/>
<rect x="47" y="543" width="60" height="17" fill="#555" stroke="#2a2a2a"/><rect x="48" y="544" width="19" height="15" fill="#383838"/>
<rect x="67" y="544" width="1" height="15" fill="#2a2a2a"/><rect x="87" y="544" width="1" height="15" fill="#2a2a2a"/>
<g fill="none" stroke="#aaa"><circle cx="56" cy="551" r="3.5"/><rect x="56" y="551" width="5" height="5" fill="#aaa"/><circle cx="76" cy="551" r="4"/><path d="M79 556h3v-3"/><circle cx="96" cy="551" r="3.5"/></g>
<g fill="#555" stroke="#b0b0b0"><rect x="64.5" y="573.5" width="14" height="11"/><rect x="70.5" y="569.5" width="14" height="11" fill="#666"/></g>
</svg>

<div class="a" style="left:1160px;top:98px;width:17px;height:843px;background:#333;border-left:1px solid #2a2a2a"></div>
<svg class="a" style="left:1163px;top:928px" width="11" height="7"><path d="M0 0h11l-5.5 7z" fill="#ddd"/></svg>
<div class="a" style="left:112px;top:941px;width:1066px;height:17px;background:#333;border-top:1px solid #262626"></div>
<div class="a" style="left:1160px;top:941px;width:17px;height:17px;background:#3c3c3c;border:1px solid #2a2a2a"></div>
<div class="a" style="left:357px;top:124px;width:561px;height:793px;background:#fff;border:1px solid #000"></div>
<div class="a" style="left:494px;top:295px;width:201px;height:215px;border:1px solid #7a7a7a;background:linear-gradient(to right,#fff 0%,#d8f0fb 15%,#8ad8f6 45%,#3cc6f3 62%,#00b9ef 72%,#00aeef 100%)"></div>
<svg class="a" style="left:568px;top:188px" width="32" height="40" viewBox="568 188 32 40">
<rect x="572.5" y="193.5" width="23" height="29" fill="#6fd0f6" stroke="#4a7cf0"/>
<g fill="#4a7cf0"><rect x="570" y="191" width="5" height="5"/><rect x="593" y="191" width="5" height="5"/><rect x="570" y="220" width="5" height="5"/><rect x="593" y="220" width="5" height="5"/><rect x="582" y="206" width="4" height="4"/></g>
</svg>
<div class="a" style="left:122px;top:129px;width:231px;height:184px;background:#4a4a4a;border:1px solid #222"></div>
<div class="a" style="left:123px;top:130px;width:229px;height:13px;background:#2d2d2d;border-top:1px solid #3a3a3a"></div>
<svg class="a" style="left:324px;top:133px" width="8" height="6"><path d="M0 3l4-3v6zM4 3l4-3v6z" fill="#bbb"/></svg>
<svg class="a" style="left:341px;top:133px" width="7" height="6"><path d="M0.5 0.5l6 5M6.5 0.5l-6 5" stroke="#ddd" stroke-width="1.6"/></svg>
<div class="a" style="left:123px;top:143px;width:229px;height:17px;background:#333;border-top:1px solid #3c3c3c;border-bottom:1px solid #262626"></div>
<div class="a" style="left:123px;top:144px;width:62px;height:15px;background:#3a3a3a;border-right:1px solid #2a2a2a"></div>
<div class="t" style="left:129px;top:147px;font-size:10.5px;font-weight:bold;color:#8f8f8f">Navigator</div>
<div class="a" style="left:186px;top:143px;width:40px;height:18px;background:#4a4a4a;border-top:1px solid #5a5a5a"></div>
<div class="t" style="left:192px;top:147px;font-size:10.5px;font-weight:bold;color:#e8e8e8"><span style="font-size:9px">&#8661;</span>Info</div>
<svg class="a" style="left:334px;top:147px" width="15" height="9"><path d="M0 2h5l-2.5 3z" fill="#ccc"/><path d="M6 1h8M6 3.5h8M6 6h8M6 8.5h8" stroke="#ccc" stroke-width="1.2"/></svg>
<svg class="a" style="left:128px;top:165px" width="222" height="145" viewBox="128 165 222 145"><path d="M129 182.5h13M135.5 176v13" stroke="#ccc"/><path d="M239.5 166v34M239.5 212v16M239.5 240v67" stroke="#353535"/><path d="M128 206.5h220M128 233.5h220" stroke="#353535"/><rect x="130.5" y="266.5" width="12" height="12" fill="#777" stroke="#bbb"/><rect x="132.5" y="268.5" width="8" height="8" fill="#888" stroke="#999"/><rect x="246" y="266" width="12" height="13" fill="none" stroke="#bbb" stroke-width="2"/></svg>
<div class="t" style="left:149px;top:167.6px;font-size:10px;color:#e0e0e0;">X:&nbsp;&nbsp; 8,084 mm</div>
<div class="t" style="left:149px;top:185.6px;font-size:10px;color:#e0e0e0;">Y:&nbsp;&nbsp; 100,437 mm</div>
<div class="t" style="left:149px;top:241.6px;font-size:10px;color:#e0e0e0;">C: 49,38 %</div>
<div class="t" style="left:149px;top:259.6px;font-size:10px;color:#e0e0e0;">M: 0 %</div>
<div class="t" style="left:149px;top:277.6px;font-size:10px;color:#e0e0e0;">Y: 0,28 %</div>
<div class="t" style="left:149px;top:295.6px;font-size:10px;color:#e0e0e0;">K: 0 %</div>
<div class="t" style="left:266px;top:241.6px;font-size:10px;color:#e0e0e0;">C: 0 %</div>
<div class="t" style="left:266px;top:259.6px;font-size:10px;color:#e0e0e0;">M: 0 %</div>
<div class="t" style="left:266px;top:277.6px;font-size:10px;color:#e0e0e0;">Y: 0 %</div>
<div class="t" style="left:266px;top:295.6px;font-size:10px;color:#e0e0e0;">K: 100 %</div>
<div class="a" style="left:119px;top:314px;width:232px;height:297px;background:#4a4a4a;border:1px solid #222"></div>
<div class="a" style="left:120px;top:315px;width:230px;height:13px;background:#2d2d2d;border-top:1px solid #3a3a3a"></div>
<svg class="a" style="left:322px;top:318px" width="8" height="6"><path d="M0 3l4-3v6zM4 3l4-3v6z" fill="#bbb"/></svg>
<svg class="a" style="left:339px;top:318px" width="7" height="6"><path d="M0.5 0.5l6 5M6.5 0.5l-6 5" stroke="#ddd" stroke-width="1.6"/></svg>
<div class="a" style="left:120px;top:328px;width:230px;height:17px;background:#333;border-top:1px solid #3c3c3c;border-bottom:1px solid #262626"></div>
<div class="a" style="left:120px;top:328px;width:87px;height:18px;background:#4a4a4a;border-top:1px solid #5a5a5a"></div>
<div class="t" style="left:126px;top:332px;font-size:10.5px;font-weight:bold;color:#e8e8e8">Document Info</div>
<div class="a" style="left:207px;top:329px;width:65px;height:15px;background:#3a3a3a;border-right:1px solid #2a2a2a"></div>
<div class="t" style="left:213px;top:332px;font-size:10.5px;font-weight:bold;color:#8f8f8f">Attributes</div>
<svg class="a" style="left:332px;top:332px" width="15" height="9"><path d="M0 2h5l-2.5 3z" fill="#ccc"/><path d="M6 1h8M6 3.5h8M6 6h8M6 8.5h8" stroke="#ccc" stroke-width="1.2"/></svg>
<div class="a" style="left:120px;top:602px;width:230px;height:8px;background:#4a4a4a;border-top:1px solid #262626"></div>
<div class="a" style="left:226px;top:604px;width:18px;height:4px;background:repeating-linear-gradient(to right,#111 0 1px,transparent 1px 2px)"></div>
<div class="t" style="left:128px;top:353.8px;font-size:10px;color:#e0e0e0;">Document:</div>
<div class="t" style="left:128px;top:377.7px;font-size:10px;color:#e0e0e0;">Name: Untitled-1</div>
<div class="t" style="left:128px;top:401.7px;font-size:10px;color:#e0e0e0;">Color Mode: CMYK color</div>
<div class="t" style="left:128px;top:413.7px;font-size:10px;color:#e0e0e0;">Color Profile: U.S. Web Coated (SWOP) v2</div>
<div class="t" style="left:128px;top:425.7px;font-size:10px;color:#e0e0e0;">Ruler Units: millimeters</div>
<div class="t" style="left:128px;top:437.7px;font-size:10px;color:#e0e0e0;">Artboard Dimensions: 210,0017 mm x 297</div>
<div class="t" style="left:128px;top:449.7px;font-size:10px;color:#e0e0e0;">mm</div>
<div class="t" style="left:128px;top:461.7px;font-size:10px;color:#e0e0e0;">Show Images in Outline Mode: OFF</div>
<div class="t" style="left:128px;top:473.7px;font-size:10px;color:#e0e0e0;">Highlight Substituted Fonts: OFF</div>
<div class="t" style="left:128px;top:485.7px;font-size:10px;color:#e0e0e0;">Highlight Substituted Glyphs: OFF</div>
<div class="t" style="left:128px;top:497.7px;font-size:10px;color:#e0e0e0;">Preserve Text Editability</div>
<div class="t" style="left:128px;top:509.7px;font-size:10px;color:#e0e0e0;">Simulate Colored Paper: OFF</div>
<div class="a" style="left:939px;top:99px;width:242px;height:282px;background:#4a4a4a;border:1px solid #222"></div>
<div class="a" style="left:940px;top:100px;width:240px;height:12px;background:#2d2d2d;border-top:1px solid #3a3a3a"></div>
<svg class="a" style="left:1152px;top:103px" width="8" height="6"><path d="M0 3l4-3v6zM4 3l4-3v6z" fill="#bbb"/></svg>
<svg class="a" style="left:1169px;top:103px" width="7" height="6"><path d="M0.5 0.5l6 5M6.5 0.5l-6 5" stroke="#ddd" stroke-width="1.6"/></svg>
<div class="a" style="left:940px;top:112px;width:240px;height:17px;background:#333;border-top:1px solid #3c3c3c;border-bottom:1px solid #262626"></div>
<div class="a" style="left:940px;top:113px;width:60px;height:15px;background:#3a3a3a;border-right:1px solid #2a2a2a"></div>
<div class="t" style="left:946px;top:116px;font-size:10.5px;font-weight:bold;color:#8f8f8f">Swatches</div>
<div class="a" style="left:1001px;top:113px;width:53px;height:15px;background:#3a3a3a;border-right:1px solid #2a2a2a"></div>
<div class="t" style="left:1007px;top:116px;font-size:10.5px;font-weight:bold;color:#8f8f8f">Brushes</div>
<div class="a" style="left:1054px;top:112px;width:56px;height:18px;background:#4a4a4a;border-top:1px solid #5a5a5a"></div>
<div class="t" style="left:1060px;top:116px;font-size:10.5px;font-weight:bold;color:#e8e8e8">Symbols</div>
<svg class="a" style="left:1162px;top:116px" width="15" height="9"><path d="M0 2h5l-2.5 3z" fill="#ccc"/><path d="M6 1h8M6 3.5h8M6 6h8M6 8.5h8" stroke="#ccc" stroke-width="1.2"/></svg>
<div class="a" style="left:1162px;top:135px;width:12px;height:240px;background:#3a3a3a"></div>
<svg class="a" style="left:1164px;top:140px" width="9" height="6"><path d="M0 6h9L4.5 0z" fill="#888"/></svg>
<svg class="a" style="left:945px;top:135px" width="200" height="34" viewBox="945 135 200 34">
<defs><linearGradient id="sy1" x1="0" y1="0" x2="0" y2="1"><stop offset="0" stop-color="#a8d4f4"/><stop offset="1" stop-color="#4a8ad0"/></linearGradient>
<radialGradient id="sy3" cx=".5" cy=".6" r=".6"><stop offset="0" stop-color="#fbd0a0"/><stop offset=".8" stop-color="#f0a060"/><stop offset="1" stop-color="#e88030"/></radialGradient></defs>
<g fill="#e4e4e4"><rect x="946" y="136" width="32" height="32"/><rect x="979" y="136" width="32" height="32"/><rect x="1012" y="136" width="32" height="32"/><rect x="1045" y="136" width="32" height="32"/><rect x="1078" y="136" width="32" height="32"/><rect x="1111" y="136" width="32" height="32"/></g>
<rect x="948" y="152" width="28" height="12" fill="url(#sy1)" stroke="#7fb0e0"/>
<g fill="#000"><path d="M983 160c2-3 6-2 8-5s0-6 3-6 2 4 5 5 5-2 6 0-3 3-2 5 3 2 3 4-4 2-6 3-3 3-6 3-5-2-7-3-5-2-4-6z"/><circle cx="994" cy="140" r="2"/><circle cx="1004" cy="146" r="2.2"/><circle cx="982" cy="158" r="2.2"/><circle cx="988" cy="146" r="1"/></g>
<circle cx="1028" cy="163" r="14" fill="url(#sy3)" stroke="#e88a30" stroke-width="2"/>
<g stroke="#111" stroke-width="1"><path d="M1049 139v12M1047 140h12"/></g><path d="M1051 140h10" stroke="#444" stroke-width="2"/><path d="M1048 141v10" stroke="#c03030" stroke-width="1.5"/>
<path d="M1070 139v4M1068 140h4M1072 167v-4M1070 166h4" stroke="#555" stroke-width=".7"/>
<circle cx="1094" cy="152" r="10.5" fill="none" stroke="#555" stroke-width="4" stroke-dasharray="3 1.5"/>
<circle cx="1094" cy="152" r="10.5" fill="none" stroke="#888" stroke-width="1.5"/>
<g transform="translate(1127 152)" fill="#f07a6a">
<ellipse rx="2.6" ry="14" /><ellipse rx="2.6" ry="14" transform="rotate(22.5)"/><ellipse rx="2.6" ry="14" transform="rotate(45)"/><ellipse rx="2.6" ry="14" transform="rotate(67.5)"/><ellipse rx="2.6" ry="14" transform="rotate(90)"/><ellipse rx="2.6" ry="14" transform="rotate(112.5)"/><ellipse rx="2.6" ry="14" transform="rotate(135)"/><ellipse rx="2.6" ry="14" transform="rotate(157.5)"/>
<circle r="4.5" fill="#c8a040"/><circle r="3" fill="#d8b860"/></g>
</svg>
<div class="a" style="left:1040px;top:185px;width:138px;height:191px;background:#4a4a4a;border:1px solid #222"></div>
<div class="a" style="left:1041px;top:186px;width:136px;height:19px;background:#333;border-top:1px solid #222;border-bottom:1px solid #262626"></div>
<div class="a" style="left:1041px;top:186px;width:54px;height:19px;background:#3a3a3a;border-right:1px solid #262626"></div>
<div class="t" style="left:1058px;top:190.9px;font-size:10.5px;color:#8f8f8f;font-weight:bold;">Styles</div>
<svg class="a" style="left:1140px;top:192px" width="36" height="10"><path d="M0 0l5 5-5 5zM6 0l5 5-5 5z" fill="#bbb"/><path d="M14.5 0v10M17.5 0v10" stroke="#777"/><path d="M20 3h5l-2.5 3z" fill="#ccc"/><path d="M26 2h8M26 4.5h8M26 7h8M26 9.5h8" stroke="#ccc" stroke-width="1.2"/></svg>
<div class="a" style="left:1041px;top:212px;width:131px;height:143px;border:1px solid #303030;border-left:0"></div>
<div class="a" style="left:1041px;top:237px;width:130px;height:1px;background:#303030"></div>
<div class="a" style="left:1041px;top:262px;width:130px;height:1px;background:#303030"></div>
<div class="a" style="left:1041px;top:287px;width:130px;height:1px;background:#303030"></div>
<div class="a" style="left:1041px;top:312px;width:130px;height:1px;background:#303030"></div>
<div class="t" style="left:1064px;top:244.9px;font-size:10.5px;color:#e8e8e8;">1 pt</div>
<div class="t" style="left:1059px;top:293.9px;font-size:10.5px;color:#e8e8e8;">t</div>
<svg class="a" style="left:1084px;top:357px" width="90" height="16" viewBox="1084 357 90 16"><circle cx="1091" cy="364.5" r="4.5" fill="none" stroke="#c8c8c8" stroke-width="1.6"/><path d="M1088 361.5l6 6" stroke="#c8c8c8" stroke-width="1.6"/><path d="M1112 360h9v9h-7l-2-2z" fill="#666"/><g fill="none" stroke="#666"><path d="M1139 361h9M1140 362v8h7v-8M1142 359h4"/></g><g fill="#777"><rect x="1164" y="370" width="1" height="1"/><rect x="1166" y="368" width="1" height="1"/><rect x="1168" y="366" width="1" height="1"/><rect x="1166" y="370" width="1" height="1"/><rect x="1168" y="370" width="1" height="1"/><rect x="1168" y="368" width="1" height="1"/></g></svg>
<div class="a" style="left:1041px;top:375px;width:136px;height:6px;background:#4a4a4a"></div>
<div class="a" style="left:1047px;top:377px;width:18px;height:3px;background:repeating-linear-gradient(to right,#111 0 1px,transparent 1px 2px)"></div>
<div class="a" style="left:784px;top:152px;width:275px;height:224px;background:#4a4a4a;border:1px solid #1a1a1a;border-top:3px solid #1a1a1a"></div>
<div class="a" style="left:785px;top:155px;width:273px;height:18px;background:#333;border-bottom:1px solid #262626"></div>
<div class="a" style="left:785px;top:155px;width:46px;height:18px;background:#4a4a4a"></div>
<div class="a" style="left:832px;top:156px;width:58px;height:16px;background:#3a3a3a;border-right:1px solid #2a2a2a"></div>
<div class="t" style="left:837px;top:159.4px;font-size:10.5px;color:#8f8f8f;font-weight:bold;">Color Guid</div>
<div class="a" style="left:891px;top:156px;width:42px;height:16px;background:#3a3a3a;border-right:1px solid #2a2a2a"></div>
<div class="t" style="left:896px;top:159.4px;font-size:10.5px;color:#8f8f8f;font-weight:bold;">Actions</div>
<div class="a" style="left:934px;top:156px;width:40px;height:16px;background:#3a3a3a;border-right:1px solid #2a2a2a"></div>
<div class="t" style="left:939px;top:159.4px;font-size:10.5px;color:#8f8f8f;font-weight:bold;">Links</div>
<div class="t" style="left:797px;top:159.4px;font-size:10.5px;color:#e8e8e8;font-weight:bold;">Color</div>
<svg class="a" style="left:789px;top:159px" width="6" height="11"><path d="M0 4l3-3 3 3M0 7l3 3 3-3" stroke="#ccc" fill="none"/></svg>
<svg class="a" style="left:1018px;top:159px" width="36" height="10"><path d="M0 0l5 5-5 5zM5 0l5 5-5 5z" fill="#bbb"/><path d="M15.5 0v10M18.5 0v10" stroke="#777"/><path d="M22 3h5l-2.5 3z" fill="#ccc"/><path d="M27 2h8M27 4.5h8M27 7h8M27 9.5h8" stroke="#ccc" stroke-width="1.2"/></svg>
<svg class="a" style="left:785px;top:174px" width="272" height="200" viewBox="785 174 272 200">
<defs>
<linearGradient id="cC" x1="0" x2="1"><stop offset="0" stop-color="#fff"/><stop offset="1" stop-color="#00aeef"/></linearGradient>
<linearGradient id="cM" x1="0" x2="1"><stop offset="0" stop-color="#6fcff5"/><stop offset="1" stop-color="#a03090"/></linearGradient>
<linearGradient id="cY" x1="0" x2="1"><stop offset="0" stop-color="#6fcff5"/><stop offset="1" stop-color="#8cd040"/></linearGradient>
<linearGradient id="cK" x1="0" x2="1"><stop offset="0" stop-color="#6fcff5"/><stop offset="1" stop-color="#0a1820"/></linearGradient>
<linearGradient id="spH" x1="0" x2="1"><stop offset="0" stop-color="#ff0000"/><stop offset=".17" stop-color="#ffe000"/><stop offset=".33" stop-color="#40c020"/><stop offset=".5" stop-color="#00c0f0"/><stop offset=".67" stop-color="#2030a0"/><stop offset=".83" stop-color="#c020a0"/><stop offset="1" stop-color="#e01020"/></linearGradient>
<linearGradient id="spV" x1="0" y1="0" x2="0" y2="1"><stop offset="0" stop-color="#fff" stop-opacity="1"/><stop offset=".45" stop-color="#fff" stop-opacity="0"/><stop offset=".55" stop-color="#000" stop-opacity="0"/><stop offset="1" stop-color="#000" stop-opacity="1"/></linearGradient>
</defs>
<rect x="789.5" y="180.5" width="9" height="9" fill="#ddd" stroke="#222"/><rect x="793.5" y="184.5" width="9" height="9" fill="none" stroke="#ddd"/>
<path d="M811 183l3-3v2h2a3 3 0 0 1 3 3v2h2l-3 3-3-3h2v-2h-3v2z" fill="#c8c8c8"/>
<rect x="800.5" y="207.5" width="19" height="19" fill="#000" stroke="#fff"/><rect x="804.5" y="211.5" width="11" height="11" fill="#4a4a4a" stroke="#fff"/>
<rect x="790.5" y="197.5" width="19" height="19" fill="#6fcff5" stroke="#fff"/>
<path d="M796 244l5-3 5 3v7l-5 3-5-3z" fill="#a0a0a0" stroke="#666"/><path d="M796 244l5 3 5-3M801 247v7" stroke="#666" fill="none"/>
<rect x="814.5" y="240.5" width="13" height="13" fill="#6fcff5" stroke="#fff"/>
<rect x="855" y="188" width="103" height="6" fill="url(#cC)"/>
<rect x="855" y="213" width="103" height="6" fill="url(#cM)"/>
<rect x="855" y="238" width="103" height="6" fill="url(#cY)"/>
<rect x="855" y="263" width="103" height="6" fill="url(#cK)"/>
<g fill="#c8c8c8"><path d="M901 199l4-5 4 5z"/><path d="M851 224l4-5 4 5z"/><path d="M851 249l4-5 4 5z"/><path d="M851 274l4-5 4 5z"/></g>
<g fill="#a8a8a8" stroke="#2a2a2a"><rect x="964.5" y="182.5" width="33" height="18"/><rect x="964.5" y="207.5" width="33" height="18"/><rect x="964.5" y="232.5" width="33" height="18"/><rect x="964.5" y="257.5" width="33" height="18"/></g>
<rect x="791.5" y="287.5" width="12" height="12" fill="#fff" stroke="#333"/><path d="M792 299l11-11" stroke="#e01010" stroke-width="1.5"/>
<rect x="803.5" y="287.5" width="13" height="12" fill="#0a0a0a"/><rect x="816.5" y="287.5" width="12" height="12" fill="#fff" stroke="#333"/>
<rect x="792" y="312" width="248" height="47" fill="url(#spH)"/>
<rect x="792" y="312" width="248" height="47" fill="url(#spV)"/>
<g fill="#777"><rect x="1050" y="367" width="1" height="1"/><rect x="1052" y="365" width="1" height="1"/><rect x="1054" y="363" width="1" height="1"/><rect x="1052" y="367" width="1" height="1"/><rect x="1054" y="367" width="1" height="1"/><rect x="1054" y="365" width="1" height="1"/></g>
</svg>
<div class="t" style="left:837px;top:186.4px;font-size:10.5px;color:#ddd;">C</div>
<div class="t" style="left:968px;top:186.4px;font-size:10.5px;color:#111;">49,38</div>
<div class="t" style="left:1000px;top:186.4px;font-size:10.5px;color:#ddd;">%</div>
<div class="t" style="left:837px;top:211.4px;font-size:10.5px;color:#ddd;">M</div>
<div class="t" style="left:968px;top:211.4px;font-size:10.5px;color:#111;">0</div>
<div class="t" style="left:1000px;top:211.4px;font-size:10.5px;color:#ddd;">%</div>
<div class="t" style="left:837px;top:236.4px;font-size:10.5px;color:#ddd;">Y</div>
<div class="t" style="left:968px;top:236.4px;font-size:10.5px;color:#111;">0,28</div>
<div class="t" style="left:1000px;top:236.4px;font-size:10.5px;color:#ddd;">%</div>
<div class="t" style="left:837px;top:261.4px;font-size:10.5px;color:#ddd;">K</div>
<div class="t" style="left:968px;top:261.4px;font-size:10.5px;color:#111;">0</div>
<div class="t" style="left:1000px;top:261.4px;font-size:10.5px;color:#ddd;">%</div>
<div class="a" style="left:785px;top:366px;width:273px;height:9px;background:#4a4a4a;border-top:1px solid #262626"></div>
<div class="a" style="left:912px;top:369px;width:18px;height:4px;background:repeating-linear-gradient(to right,#111 0 1px,transparent 1px 2px)"></div>
<div class="a" style="left:937px;top:387px;width:232px;height:136px;background:#4a4a4a;border:1px solid #222"></div>
<div class="a" style="left:938px;top:388px;width:230px;height:13px;background:#2d2d2d;border-top:1px solid #3a3a3a"></div>
<svg class="a" style="left:1140px;top:391px" width="8" height="6"><path d="M0 3l4-3v6zM4 3l4-3v6z" fill="#bbb"/></svg>
<svg class="a" style="left:1157px;top:391px" width="7" height="6"><path d="M0.5 0.5l6 5M6.5 0.5l-6 5" stroke="#ddd" stroke-width="1.6"/></svg>
<div class="a" style="left:938px;top:401px;width:230px;height:17px;background:#333;border-top:1px solid #3c3c3c;border-bottom:1px solid #262626"></div>
<div class="a" style="left:938px;top:402px;width:66px;height:15px;background:#3a3a3a;border-right:1px solid #2a2a2a"></div>
<div class="t" style="left:944px;top:405px;font-size:10.5px;font-weight:bold;color:#8f8f8f">Transform</div>
<div class="a" style="left:1004px;top:402px;width:41px;height:15px;background:#3a3a3a;border-right:1px solid #2a2a2a"></div>
<div class="t" style="left:1010px;top:405px;font-size:10.5px;font-weight:bold;color:#8f8f8f">Align</div>
<div class="a" style="left:1045px;top:401px;width:66px;height:18px;background:#4a4a4a;border-top:1px solid #5a5a5a"></div>
<div class="t" style="left:1051px;top:405px;font-size:10.5px;font-weight:bold;color:#e8e8e8">Pathfinder</div>
<svg class="a" style="left:1150px;top:405px" width="15" height="9"><path d="M0 2h5l-2.5 3z" fill="#ccc"/><path d="M6 1h8M6 3.5h8M6 6h8M6 8.5h8" stroke="#ccc" stroke-width="1.2"/></svg>
<div class="t" style="left:942.6px;top:425.9px;font-size:10.5px;color:#e6e6e6;">Shape Modes:</div>
<div class="t" style="left:942.6px;top:474.9px;font-size:10.5px;color:#e6e6e6;">Pathfinders:</div>
<div class="a" style="left:1087px;top:445px;width:75px;height:19px;background:#4e4e4e;border:1px solid #333"></div>
<div class="t" style="left:1107px;top:449.4px;font-size:10.5px;color:#8a8a8a;">Expand</div>
<svg class="a" style="left:940px;top:440px" width="220" height="78" viewBox="940 440 220 78">
<g stroke="#aaa" fill="#777"><rect x="949.5" y="448.5" width="9" height="9"/><rect x="952.5" y="451.5" width="9" height="9"/></g>
<g stroke="#aaa" fill="none"><rect x="984.5" y="448.5" width="9" height="9"/></g><g stroke="#666" fill="#444"><rect x="987.5" y="451.5" width="9" height="9"/></g><rect x="984.5" y="448.5" width="9" height="9" fill="none" stroke="#aaa"/>
<g stroke="#aaa" fill="none"><rect x="1020.5" y="448.5" width="9" height="9"/><rect x="1023.5" y="451.5" width="9" height="9"/></g><rect x="1024" y="452" width="5" height="5" fill="#888"/>
<g stroke="#aaa" fill="#666"><rect x="1056.5" y="448.5" width="9" height="9"/><rect x="1059.5" y="451.5" width="9" height="9"/></g>
<g stroke="#aaa" fill="none"><rect x="952.5" y="497.5" width="7" height="7"/><rect x="955.5" y="500.5" width="7" height="7"/><rect x="958.5" y="503.5" width="7" height="7"/></g>
<g fill="#bbb"><rect x="989" y="497" width="8" height="8"/><rect x="993" y="501" width="8" height="8"/></g><rect x="996" y="504" width="7" height="7" fill="#999"/>
<g fill="#bbb"><rect x="1026" y="497" width="10" height="9"/></g><rect x="1030" y="502" width="9" height="9" fill="#999"/>
<g fill="#666"><rect x="1064" y="497" width="10" height="9"/></g><rect x="1066" y="500" width="8" height="8" fill="#aaa"/><rect x="1068" y="503" width="8" height="8" fill="#777"/>
<g stroke="#ccc" fill="none"><rect x="1101.5" y="497.5" width="9" height="9"/><rect x="1105.5" y="501.5" width="9" height="9"/></g>
<g stroke="#777" fill="none"><rect x="1139.5" y="497.5" width="9" height="9"/></g><g stroke="#bbb" fill="none"><path d="M1143.5 510.5h9v-9"/></g>
</svg>
<div class="a" style="left:937px;top:524px;width:232px;height:323px;background:#4a4a4a;border:1px solid #222"></div>
<div class="a" style="left:938px;top:525px;width:230px;height:17px;background:#333;border-top:1px solid #3c3c3c;border-bottom:1px solid #262626"></div>
<div class="a" style="left:938px;top:525px;width:47px;height:18px;background:#4a4a4a;border-top:1px solid #5a5a5a"></div>
<div class="t" style="left:944px;top:529px;font-size:10.5px;font-weight:bold;color:#e8e8e8">Layers</div>
<svg class="a" style="left:1150px;top:529px" width="15" height="9"><path d="M0 2h5l-2.5 3z" fill="#ccc"/><path d="M6 1h8M6 3.5h8M6 6h8M6 8.5h8" stroke="#ccc" stroke-width="1.2"/></svg>
<div class="a" style="left:938px;top:838px;width:230px;height:8px;background:#4a4a4a;border-top:1px solid #262626"></div>
<div class="a" style="left:1044px;top:840px;width:18px;height:4px;background:repeating-linear-gradient(to right,#111 0 1px,transparent 1px 2px)"></div>
<div class="a" style="left:943px;top:548px;width:220px;height:272px;border:1px solid #333;background:#4a4a4a"></div>
<div class="a" style="left:944px;top:549px;width:218px;height:20px;background:#5a6270;border-bottom:1px solid #3a3f48"></div>
<svg class="a" style="left:944px;top:549px" width="218" height="21" viewBox="944 549 218 21">
<path d="M964.5 549v20M985.5 549v20M991.5 549v20M1127.5 549v20" stroke="#3a3f48"/>
<rect x="986" y="550" width="4" height="18" fill="#4a74f0"/>
<ellipse cx="953.5" cy="558" rx="5.5" ry="3.5" fill="none" stroke="#bbb" stroke-width="1.3"/><circle cx="953.5" cy="558" r="2" fill="#bbb"/>
<path d="M996 553v10l6-5z" fill="#ddd"/>
<rect x="1013.5" y="551.5" width="17" height="17" fill="#fff" stroke="#111"/>
<defs><linearGradient id="lth" x1="0" x2="1"><stop offset="0" stop-color="#fff"/><stop offset="1" stop-color="#00aeef"/></linearGradient></defs>
<rect x="1016" y="556" width="12" height="11" fill="url(#lth)"/><rect x="1021" y="552" width="2" height="2" fill="#6fcff5"/>
<circle cx="1137" cy="559" r="4" fill="none" stroke="#ccc"/>
<rect x="1148.5" y="555.5" width="6" height="6" fill="#3a70f0" stroke="#111"/>
<path d="M1154 549h7v7z" fill="#ddd"/>
</svg>
<div class="t" style="left:1035.5px;top:553.9px;font-size:10.5px;color:#eeeeee;">Layer 1</div>
<div class="t" style="left:943px;top:824.6px;font-size:10px;color:#e6e6e6;">1 Layer</div>
<svg class="a" style="left:1020px;top:820px" width="148" height="18" viewBox="1020 820 148 18">
<circle cx="1032" cy="827" r="3.5" fill="none" stroke="#c8c8c8" stroke-width="1.3"/><path d="M1029.5 830l-3.5 4" stroke="#c8c8c8" stroke-width="1.5"/>
<rect x="1051.5" y="823.5" width="7" height="7" fill="none" stroke="#bbb"/><rect x="1054.5" y="826.5" width="7" height="7" fill="#888" stroke="#bbb"/>
<path d="M1077 824h3v2h-3zM1082 825h7v7h-5z" fill="#bbb"/><path d="M1076 827l2 2 2-2" stroke="#bbb" fill="none"/>
<path d="M1104 824h9v9h-6l-3-3z" fill="#bbb"/>
<g fill="none" stroke="#666"><path d="M1130 825h9M1131 826v7h7v-7M1133 823h3"/></g>
<g fill="#777"><rect x="1160" y="834" width="1" height="1"/><rect x="1162" y="832" width="1" height="1"/><rect x="1164" y="830" width="1" height="1"/><rect x="1162" y="834" width="1" height="1"/><rect x="1164" y="834" width="1" height="1"/><rect x="1164" y="832" width="1" height="1"/></g>
</svg>
<div class="a" style="left:1178px;top:78px;width:39px;height:880px;background:#484848;border:1px solid #262626;border-top:0"></div>
<div class="a" style="left:1178px;top:78px;width:39px;height:13px;background:#2d2d2d;border-bottom:1px solid #222"></div>
<svg class="a" style="left:1203px;top:81px" width="9" height="7"><path d="M0 3.5l4.5-3.5v7zM4.5 3.5l4.5-3.5v7z" fill="#bbb"/></svg>
<div class="a" style="left:1179px;top:187px;width:37px;height:1px;background:#2a2a2a"></div>
<div class="a" style="left:1179px;top:188px;width:37px;height:1px;background:#555"></div>
<div class="a" style="left:1179px;top:257px;width:37px;height:1px;background:#2a2a2a"></div>
<svg class="a" style="left:1179px;top:91px" width="38" height="170" viewBox="1179 91 38 170">
<g fill="#111"><rect x="1188" y="95" width="1" height="4"/><rect x="1190" y="95" width="1" height="4"/><rect x="1192" y="95" width="1" height="4"/><rect x="1194" y="95" width="1" height="4"/><rect x="1196" y="95" width="1" height="4"/><rect x="1198" y="95" width="1" height="4"/><rect x="1200" y="95" width="1" height="4"/><rect x="1202" y="95" width="1" height="4"/><rect x="1204" y="95" width="1" height="4"/><rect x="1206" y="95" width="1" height="4"/></g>
<g fill="#b8b8b8"><rect x="1189" y="108" width="17" height="1.5"/><rect x="1189" y="112" width="17" height="2"/><rect x="1189" y="117" width="17" height="3"/></g>
<defs><linearGradient id="dg" x1="0" x2="1"><stop offset="0" stop-color="#222"/><stop offset="1" stop-color="#ccc"/></linearGradient></defs>
<rect x="1189.5" y="135.5" width="16" height="12" fill="url(#dg)" stroke="#aaa"/>
<circle cx="1195" cy="166" r="5.5" fill="#aaa" stroke="#bbb"/><circle cx="1199" cy="171" r="5.5" fill="none" stroke="#c8c8c8" stroke-width="1.5"/>
<g fill="#111"><rect x="1188" y="192" width="1" height="4"/><rect x="1190" y="192" width="1" height="4"/><rect x="1192" y="192" width="1" height="4"/><rect x="1194" y="192" width="1" height="4"/><rect x="1196" y="192" width="1" height="4"/><rect x="1198" y="192" width="1" height="4"/><rect x="1200" y="192" width="1" height="4"/><rect x="1202" y="192" width="1" height="4"/><rect x="1204" y="192" width="1" height="4"/><rect x="1206" y="192" width="1" height="4"/></g>
<rect x="1182" y="199" width="29" height="23" rx="2" fill="#333"/>
<circle cx="1197" cy="211" r="7.5" fill="none" stroke="#bbb" stroke-width="1.3" stroke-dasharray="2 1.5"/><circle cx="1197" cy="211" r="5" fill="#aaa"/>
<path d="M1191.5 230.5h14v13h-7" fill="none" stroke="#bbb"/><rect x="1189.5" y="236.5" width="6" height="5" fill="none" stroke="#bbb"/><rect x="1192.5" y="239.5" width="6" height="5" fill="#666" stroke="#bbb"/>
</svg>
<div class="a" style="left:1169px;top:512px;width:7px;height:15px;background:#8a8a8a"></div>
<div class="a" style="left:322px;top:543px;width:563px;height:363px;background:rgba(0,0,0,.28);filter:blur(1.5px)"></div>
<div class="a" style="left:319px;top:539px;width:563px;height:364px;background:#4a4a4a;border:2px solid #5b7cb0;border-top:0;border-radius:7px 7px 0 0"></div>
<div class="a" style="left:319px;top:539px;width:563px;height:22px;background:linear-gradient(#a4b4d4,#8a9cc4 40%,#6a84b4);border:1px solid #4a6aa0;border-bottom:0;border-radius:7px 7px 0 0"></div>
<div class="t" style="left:324px;top:544.9px;font-size:11.5px;color:#f4f0e4;font-weight:bold;">Color Picker</div>
<div class="t" style="left:336.5px;top:577.1px;font-size:12px;color:#e6e6e6;">Select Color:</div>
<svg class="a" style="left:330px;top:590px" width="545" height="300" viewBox="330 590 545 300">
<defs>
<linearGradient id="fh" x1="0" x2="1"><stop offset="0" stop-color="#fff"/><stop offset="1" stop-color="#00bfff"/></linearGradient>
<linearGradient id="fv" x1="0" y1="0" x2="0" y2="1"><stop offset="0" stop-color="#000" stop-opacity="0"/><stop offset="1" stop-color="#000" stop-opacity="1"/></linearGradient>
<linearGradient id="hue" x1="0" y1="0" x2="0" y2="1"><stop offset="0" stop-color="#ff0000"/><stop offset=".1667" stop-color="#ff00ff"/><stop offset=".3333" stop-color="#0000ff"/><stop offset=".5" stop-color="#00ffff"/><stop offset=".6667" stop-color="#00ff00"/><stop offset=".8333" stop-color="#ffff00"/><stop offset="1" stop-color="#ff0000"/></linearGradient>
</defs>
<rect x="336" y="601" width="255" height="255" fill="url(#fh)"/>
<rect x="336" y="601" width="255" height="255" fill="url(#fv)"/>
<circle cx="473" cy="612" r="4.5" fill="none" stroke="#222" stroke-width="1.3"/>
<rect x="610" y="601" width="25" height="255" fill="url(#hue)"/>
<path d="M603 713l5 5-5 5z" fill="#bbb" stroke="#666" stroke-width=".5"/><path d="M642 713l-5 5 5 5z" fill="#bbb" stroke="#666" stroke-width=".5"/>
<rect x="654.5" y="596.5" width="61" height="79" fill="#6fd0f6" stroke="#000"/>
<path d="M732 646l5-3 5 3v7l-5 3-5-3z" fill="#a8a8a8" stroke="#666"/><path d="M732 646l5 3 5-3M737 649v7" stroke="#666" fill="none"/>
<rect x="730.5" y="662.5" width="16" height="16" fill="#6fd0f6" stroke="#fff"/>
<g fill="#3e3e3e" stroke="#2a2a2a"><circle cx="661" cy="701" r="5"/><circle cx="661" cy="726" r="5"/><circle cx="661" cy="751" r="5"/><circle cx="661" cy="776" r="5"/><circle cx="661" cy="801" r="5"/><circle cx="661" cy="826" r="5"/></g>
<circle cx="661" cy="701" r="2" fill="#ddd"/>
<g fill="#a6a6a6" stroke="#2a2a2a"><rect x="686.5" y="691.5" width="56" height="18"/><rect x="686.5" y="716.5" width="56" height="18"/><rect x="686.5" y="741.5" width="56" height="18"/><rect x="686.5" y="766.5" width="56" height="18"/><rect x="686.5" y="791.5" width="56" height="18"/><rect x="686.5" y="816.5" width="56" height="18"/>
<rect x="770.5" y="766.5" width="56" height="18"/><rect x="770.5" y="791.5" width="56" height="18"/><rect x="770.5" y="816.5" width="56" height="18"/><rect x="770.5" y="841.5" width="56" height="18"/></g>
<rect x="667.5" y="840.5" width="76" height="20" fill="#a6a6a6" stroke="#e89030"/>
<rect x="670" y="844" width="43" height="13" fill="#3a6ab0"/>
<defs><linearGradient id="btn" x1="0" y1="0" x2="0" y2="1"><stop offset="0" stop-color="#5e5e5e"/><stop offset="1" stop-color="#4e4e4e"/></linearGradient></defs>
<rect x="760.5" y="596.5" width="103" height="25" fill="url(#btn)" stroke="#1e1e1e" stroke-width="2"/>
<rect x="761.5" y="626.5" width="101" height="23" fill="url(#btn)" stroke="#2a2a2a"/>
<rect x="761.5" y="655.5" width="101" height="23" fill="url(#btn)" stroke="#2a2a2a"/>
<rect x="337.5" y="872.5" width="11" height="11" fill="#4e4e4e" stroke="#2a2a2a"/>
</svg>
<div class="t" style="left:669px;top:695.1px;font-size:12px;color:#e6e6e6;">H:</div>
<div class="t" style="left:690px;top:695.1px;font-size:12px;color:#111;">196°</div>
<div class="t" style="left:669px;top:720.1px;font-size:12px;color:#e6e6e6;">S:</div>
<div class="t" style="left:690px;top:720.1px;font-size:12px;color:#111;">54%</div>
<div class="t" style="left:669px;top:745.1px;font-size:12px;color:#e6e6e6;">B:</div>
<div class="t" style="left:690px;top:745.1px;font-size:12px;color:#111;">96%</div>
<div class="t" style="left:669px;top:770.1px;font-size:12px;color:#e6e6e6;">R:</div>
<div class="t" style="left:690px;top:770.1px;font-size:12px;color:#111;">111</div>
<div class="t" style="left:669px;top:795.1px;font-size:12px;color:#e6e6e6;">G:</div>
<div class="t" style="left:690px;top:795.1px;font-size:12px;color:#111;">208</div>
<div class="t" style="left:669px;top:820.1px;font-size:12px;color:#e6e6e6;">B:</div>
<div class="t" style="left:690px;top:820.1px;font-size:12px;color:#111;">246</div>
<div class="t" style="left:754px;top:770.1px;font-size:12px;color:#e6e6e6;">C:</div>
<div class="t" style="left:774px;top:770.1px;font-size:12px;color:#111;">49%</div>
<div class="t" style="left:754px;top:795.1px;font-size:12px;color:#e6e6e6;">M:</div>
<div class="t" style="left:774px;top:795.1px;font-size:12px;color:#111;">0%</div>
<div class="t" style="left:754px;top:820.1px;font-size:12px;color:#e6e6e6;">Y:</div>
<div class="t" style="left:774px;top:820.1px;font-size:12px;color:#111;">0%</div>
<div class="t" style="left:754px;top:845.1px;font-size:12px;color:#e6e6e6;">K:</div>
<div class="t" style="left:774px;top:845.1px;font-size:12px;color:#111;">0%</div>
<div class="t" style="left:656px;top:845.1px;font-size:12px;color:#e6e6e6;">#</div>
<div class="t" style="left:671px;top:845.1px;font-size:12px;color:#e8eef8;">6FD0F6</div>
<div class="t" style="left:803px;top:603.1px;font-size:12px;color:#e6e6e6;">OK</div>
<div class="t" style="left:793px;top:632.1px;font-size:12px;color:#e6e6e6;">Cancel</div>
<div class="t" style="left:770px;top:661.1px;font-size:12px;color:#e6e6e6;">Color Swatches</div>
<div class="t" style="left:353.5px;top:871.6px;font-size:12px;color:#e6e6e6;">Only Web Colors</div>
<svg class="a" style="left:112px;top:941px" width="1066" height="17" viewBox="112 941 1066 17">
<rect x="118" y="943" width="42" height="14" fill="#a6a6a6"/><rect x="160" y="943" width="15" height="14" fill="#555"/><path d="M163 947h9l-4.5 6z" fill="#ddd"/>
<path d="M187 944v9M188 948.5l5-4.5v9z" fill="#666" stroke="#666"/><path d="M204 948.5l5-4.5v9z" fill="#666"/>
<rect x="219" y="943" width="41" height="14" fill="#a6a6a6"/><rect x="260" y="943" width="15" height="14" fill="#555"/><path d="M263 947h9l-4.5 6z" fill="#ddd"/>
<path d="M286 944l5 4.5-5 4.5z" fill="#666"/><path d="M300 944l5 4.5-5 4.5zM306 944v9" fill="#666" stroke="#666"/>
<rect x="316" y="942" width="1" height="15" fill="#2a2a2a"/><rect x="517" y="942" width="1" height="15" fill="#2a2a2a"/>
<path d="M524 945l6 4-6 4z" fill="#ddd"/>
<path d="M549 945l-6 4 6 4z" fill="#ddd"/>
<rect x="840" y="942" width="15" height="15" fill="#888"/>
<path d="M1147 945l6 4-6 4z" fill="#ddd"/>
</svg>
<div class="t" style="left:120px;top:945.6px;font-size:10px;color:#111;">94%</div>
<div class="t" style="left:222px;top:945.6px;font-size:10px;color:#111;">1</div>
<div class="t" style="left:390px;top:945.4px;font-size:10.5px;color:#e0e0e0;">Eyedropper</div>
<!--CANVAS-->
</body></html>
